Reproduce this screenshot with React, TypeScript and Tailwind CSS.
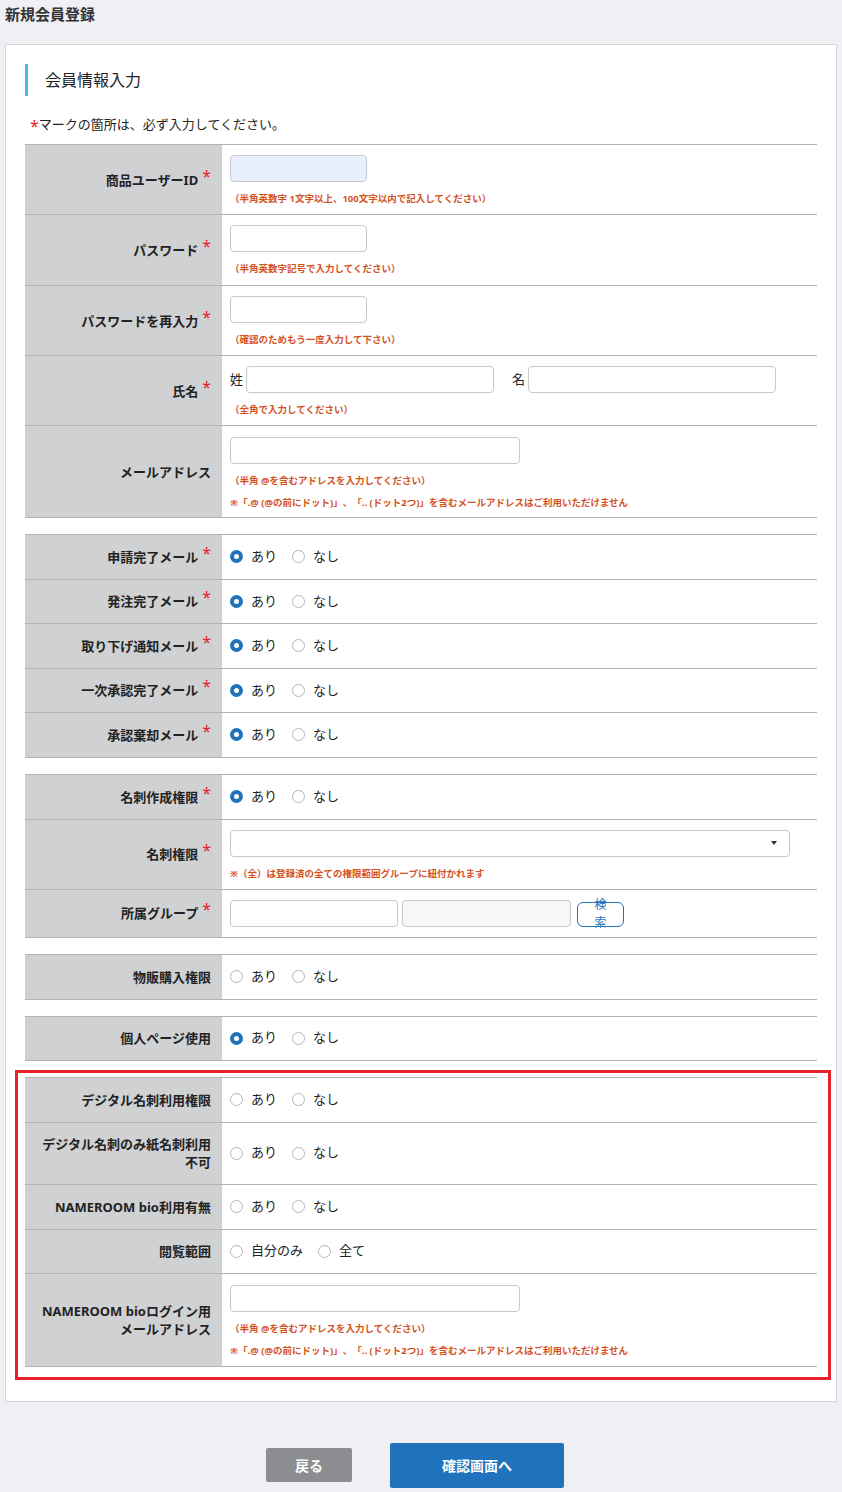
import type { ReactNode } from 'react';

const HINT = 'text-[#d4521f] text-[9.5px] font-bold leading-[16px]';

function Req() {
  return <span className="relative -top-[3px] ml-[4px] text-[16px] leading-none font-normal text-[#e8202a]">*</span>;
}

interface RowProps {
  label: ReactNode;
  required?: boolean;
  h?: string;
  top?: string;
  children: ReactNode;
}

// h includes the bottom border (border-box)
function Row({ label, required, h = 'h-[44.5px]', top, children }: RowProps) {
  return (
    <div className={`flex border-b border-[#b3b3b3] ${h}`}>
      <div className="flex w-[197px] shrink-0 items-center justify-end bg-[#d0d1d3] pr-[11px] pl-[10px] text-right text-[13px] font-bold leading-[18px] text-[#222]">
        <span>
          {label}
          {required && <Req />}
        </span>
      </div>
      <div className={`flex min-w-0 flex-1 flex-col pl-[8px] ${top ? `justify-start ${top}` : 'justify-center'}`}>{children}</div>
    </div>
  );
}

function Radio({ checked, label }: { checked?: boolean; label: string }) {
  return (
    <span className="flex items-center gap-[8px]">
      {checked ? (
        <span className="h-[13px] w-[13px] rounded-full border-[4px] border-[#1f72bb] bg-white" />
      ) : (
        <span className="h-[13px] w-[13px] rounded-full border border-[#b5b5b5] bg-white" />
      )}
      <span>{label}</span>
    </span>
  );
}

function YesNo({ yes = false, a = 'あり', b = 'なし' }: { yes?: boolean; a?: string; b?: string }) {
  return (
    <div className="flex items-center gap-[15px] text-[13px] text-[#222]">
      <Radio checked={yes} label={a} />
      <Radio label={b} />
    </div>
  );
}

function Input({ w, blue, gray }: { w: string; blue?: boolean; gray?: boolean }) {
  return (
    <input
      readOnly
      className={`h-[27px] shrink-0 ${w} rounded-[4px] border border-[#c9c9c9] ${blue ? 'bg-[#e8f0fe]' : gray ? 'bg-[#f7f7f7]' : 'bg-white'} outline-none`}
    />
  );
}

function EmailNotes() {
  return (
    <>
      <p className={`mt-[9px] ${HINT}`}>（半角 @を含むアドレスを入力してください）</p>
      <p className={`mt-[6px] ${HINT}`}>※「.@ (@の前にドット)」、「.. (ドット2つ)」を含むメールアドレスはご利用いただけません</p>
    </>
  );
}

export default function App() {
  return (
    <div className="min-h-screen bg-[#eff0f4] font-['Noto_Sans','Noto_Sans_CJK_JP',sans-serif] text-[#333] [text-spacing-trim:space-all]">
      <h1 className="h-[44px] px-[5px] pt-[4px] text-[15px] font-bold leading-[20px] text-[#333]">新規会員登録</h1>

      <div className="mx-[5px] border border-[#d5d6d9] bg-white px-[19px] pt-[19px] pb-[34px]">
        <div className="flex h-[32px] items-center border-l-[3px] border-[#4fb9d9] pl-[17px] text-[16px] text-[#222]">
          会員情報入力
        </div>
        <p className="mt-[18px] mb-[10px] h-[20px] pl-[5px] text-[13px] leading-[20px] text-[#222]">
          <span className="relative top-[3px] text-[16px] leading-none text-[#e8202a]">*</span>マークの箇所は、必ず入力してください。
        </p>

        {/* basic info */}
        <div className="mb-[16px] border-t border-[#b3b3b3]">
          <Row label="商品ユーザーID" required h="h-[70px]" top="pt-[10px]">
            <Input w="w-[137px]" blue />
            <p className={`mt-[9px] ${HINT}`}>（半角英数字 1文字以上、100文字以内で記入してください）</p>
          </Row>
          <Row label="パスワード" required h="h-[71px]" top="pt-[10px]">
            <Input w="w-[137px]" />
            <p className={`mt-[9px] ${HINT}`}>（半角英数字記号で入力してください）</p>
          </Row>
          <Row label="パスワードを再入力" required h="h-[70px]" top="pt-[10px]">
            <Input w="w-[137px]" />
            <p className={`mt-[9px] ${HINT}`}>（確認のためもう一度入力して下さい）</p>
          </Row>
          <Row label="氏名" required h="h-[70px]" top="pt-[10px]">
            <div className="flex items-center text-[13px] text-[#222]">
              <span className="mr-[3px]">姓</span>
              <Input w="w-[248px]" />
              <span className="mr-[3px] ml-[18px]">名</span>
              <Input w="w-[248px]" />
            </div>
            <p className={`mt-[9px] ${HINT}`}>（全角で入力してください）</p>
          </Row>
          <Row label="メールアドレス" h="h-[92px]" top="pt-[11px]">
            <Input w="w-[290px]" />
            <EmailNotes />
          </Row>
        </div>

        {/* mail settings */}
        <div className="mb-[16px] border-t border-[#b3b3b3]">
          <Row label="申請完了メール" required>
            <YesNo yes />
          </Row>
          <Row label="発注完了メール" required>
            <YesNo yes />
          </Row>
          <Row label="取り下げ通知メール" required>
            <YesNo yes />
          </Row>
          <Row label="一次承認完了メール" required>
            <YesNo yes />
          </Row>
          <Row label="承認棄却メール" required>
            <YesNo yes />
          </Row>
        </div>

        {/* card permissions */}
        <div className="mb-[16px] border-t border-[#b3b3b3]">
          <Row label="名刺作成権限" required h="h-[45px]">
            <YesNo yes />
          </Row>
          <Row label="名刺権限" required h="h-[70px]" top="pt-[10px]">
            <div className="flex h-[27px] w-[560px] items-center justify-end rounded-[4px] border border-[#c9c9c9] bg-white pr-[12px]">
              <span className="h-0 w-0 border-x-[3px] border-t-[4px] border-x-transparent border-t-[#333]" />
            </div>
            <p className={`mt-[9px] ${HINT}`}>※（全）は登録済の全ての権限範囲グループに紐付かれます</p>
          </Row>
          <Row label="所属グループ" required h="h-[48px]">
            <div className="flex items-center">
              <Input w="w-[168px]" />
              <span className="ml-[4px]">
                <Input w="w-[169px]" gray />
              </span>
              <button className="mt-[2px] ml-[6px] flex h-[25px] w-[47px] items-center justify-center overflow-visible rounded-[6px] border border-[#1f72bb] bg-white px-[12px] text-[12px] leading-[18px] text-[#1f72bb]">
                検索
              </button>
            </div>
          </Row>
        </div>

        <div className="mb-[16px] border-t border-[#b3b3b3]">
          <Row label="物販購入権限" h="h-[45px]">
            <YesNo />
          </Row>
        </div>

        <div className="mb-[16px] border-t border-[#b3b3b3]">
          <Row label="個人ページ使用" h="h-[44px]">
            <YesNo yes />
          </Row>
        </div>

        {/* highlighted block */}
        <div className="relative">
          <span className="pointer-events-none absolute -top-[7px] -right-[14px] -bottom-[13px] -left-[10px] border-[3px] border-[#e8202a]" />
          <div className="border-t border-[#b3b3b3]">
            <Row label="デジタル名刺利用権限" h="h-[45px]">
              <YesNo />
            </Row>
            <Row
              label={
                <>
                  デジタル名刺のみ紙名刺利用
                  <br />
                  不可
                </>
              }
              h="h-[62px]"
            >
              <YesNo />
            </Row>
            <Row label="NAMEROOM bio利用有無" h="h-[45px]">
              <YesNo />
            </Row>
            <Row label="閲覧範囲" h="h-[44px]">
              <YesNo a="自分のみ" b="全て" />
            </Row>
            <Row
              label={
                <>
                  NAMEROOM bioログイン用
                  <br />
                  メールアドレス
                </>
              }
              h="h-[93px]"
              top="pt-[11px]"
            >
              <Input w="w-[290px]" />
              <EmailNotes />
            </Row>
          </div>
        </div>
      </div>

      <div className="flex items-center justify-center gap-[38px] pt-[41px] pr-[12px]">
        <button className="h-[34px] w-[86px] rounded-[2px] bg-[#8b8d90] text-[14px] font-bold text-white">戻る</button>
        <button className="h-[45px] w-[174px] rounded-[2px] bg-[#1f72bb] text-[14px] font-bold text-white">確認画面へ</button>
      </div>
    </div>
  );
}
